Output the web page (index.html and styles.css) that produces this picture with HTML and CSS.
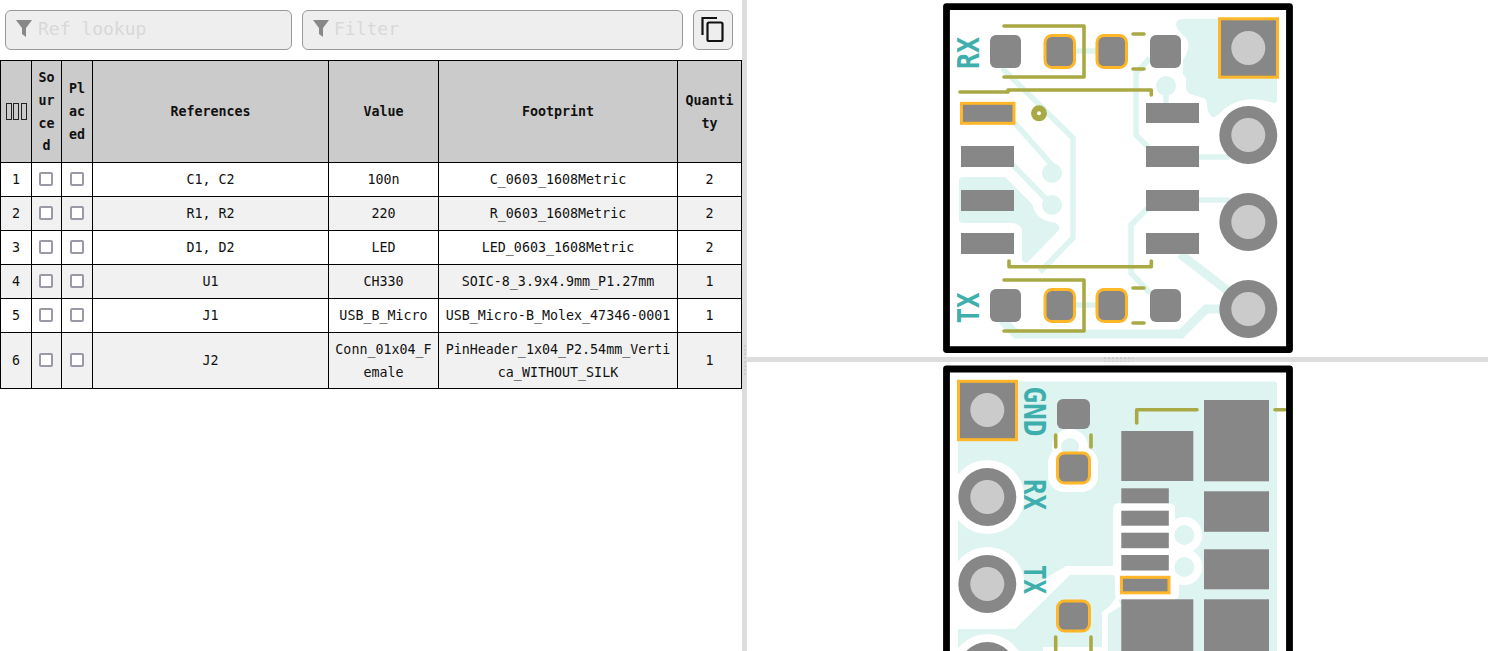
FILE: index.html
```html
<!DOCTYPE html>
<html lang="en">
<head>
<meta charset="utf-8">
<title>Interactive BOM</title>
<link rel="stylesheet" href="styles.css">
</head>
<body>
<div class="app">
  <section class="bom">
    <div class="toolbar">
      <label class="search search-ref">
        <svg class="funnel" viewBox="0 0 16 17"><path d="M0 0H16L10 8V17L6 14V8Z"/></svg>
        <input type="text" placeholder="Ref lookup">
      </label>
      <label class="search search-filter">
        <svg class="funnel" viewBox="0 0 16 17"><path d="M0 0H16L10 8V17L6 14V8Z"/></svg>
        <input type="text" placeholder="Filter">
      </label>
      <button class="copy" type="button" aria-label="Copy">
        <svg viewBox="0 0 24 28" class="copy-icon"><path d="M1.5 19V2H16"/><rect x="6.5" y="6.5" width="15" height="18.5" rx="1.5"/></svg>
      </button>
    </div>
    <table class="table">
      <colgroup><col class="c1"><col class="c2"><col class="c3"><col class="c4"><col class="c5"><col class="c6"><col class="c7"></colgroup>
      <thead>
        <tr><th><span class="tofu"><i></i><i></i><i></i></span></th><th>Sourced</th><th>Placed</th><th>References</th><th>Value</th><th>Footprint</th><th>Quantity</th></tr>
      </thead>
      <tbody>
        <tr><td>1</td><td><input type="checkbox"></td><td><input type="checkbox"></td><td>C1, C2</td><td>100n</td><td>C_0603_1608Metric</td><td>2</td></tr>
        <tr><td>2</td><td><input type="checkbox"></td><td><input type="checkbox"></td><td>R1, R2</td><td>220</td><td>R_0603_1608Metric</td><td>2</td></tr>
        <tr><td>3</td><td><input type="checkbox"></td><td><input type="checkbox"></td><td>D1, D2</td><td>LED</td><td>LED_0603_1608Metric</td><td>2</td></tr>
        <tr><td>4</td><td><input type="checkbox"></td><td><input type="checkbox"></td><td>U1</td><td>CH330</td><td>SOIC-8_3.9x4.9mm_P1.27mm</td><td>1</td></tr>
        <tr><td>5</td><td><input type="checkbox"></td><td><input type="checkbox"></td><td>J1</td><td>USB_B_Micro</td><td>USB_Micro-B_Molex_47346-0001</td><td>1</td></tr>
        <tr><td>6</td><td><input type="checkbox"></td><td><input type="checkbox"></td><td>J2</td><td>Conn_01x04_Female</td><td>PinHeader_1x04_P2.54mm_Vertica_WITHOUT_SILK</td><td>1</td></tr>
      </tbody>
    </table>
  </section>
  <div class="gutter-v"><span class="grip grip-v"></span></div>
  <section class="boards">
    <div class="board board-top">
      <svg class="pcb" viewBox="747 0 741 357">
        <g class="cu-fill">
          <path d="M1176 25Q1176 19 1182 19H1277V100Q1277 104 1274 103Q1240 92 1219 114Q1214 119 1211 116Q1207 112 1207 104Q1207 98 1200 97L1190 94Q1186 92 1186 86V78L1183 74V60Q1192 45 1186 38L1178 30Z"/>
          <path d="M963 177H1005L1032 204Q1036 220 1052 222Q1062 224 1058 231L1028 262Q1024 264 1022 260V232Q1022 224 1012 223H963Q959 223 959 219V181Q959 177 963 177Z"/>
        </g>
        <g class="cu-track">
          <path d="M1002 68L1073 138V238L1040 272"/>
          <path d="M1014 122L1052 165"/>
          <path d="M1012 164L1052 205"/>
          <path d="M1075 51H1097"/>
          <path d="M1150 58L1136 73V135L1148 147"/>
          <path d="M1166 86V104"/>
          <path d="M1199 157H1230"/>
          <path d="M1199 200H1230"/>
          <path d="M1148 208L1131 225V273L1150 293"/>
          <path d="M1075 305H1097"/>
          <path class="wide" d="M1180 254L1236 297"/>
          <path class="wide" d="M1225 309H1206L1181 334H1016L1002 320"/>
        </g>
        <g class="cu-via">
          <circle cx="1052" cy="173" r="10"/>
          <circle cx="1052" cy="205" r="10"/>
          <circle cx="1166" cy="86" r="10"/>
        </g>
        <g class="pad">
          <rect x="990" y="35" width="31" height="33" rx="6"/>
          <rect x="1150" y="35" width="31" height="33" rx="6"/>
          <rect x="990" y="289" width="31" height="33" rx="6"/>
          <rect x="1150" y="289" width="31" height="33" rx="6"/>
          <rect x="1146" y="103" width="53" height="20"/>
          <rect x="961" y="146" width="53" height="21"/>
          <rect x="1146" y="146" width="53" height="21"/>
          <rect x="961" y="190" width="53" height="21"/>
          <rect x="1146" y="190" width="53" height="21"/>
          <rect x="961" y="233" width="53" height="21"/>
          <rect x="1146" y="233" width="53" height="21"/>
          <circle cx="1248.3" cy="135" r="29"/>
          <circle cx="1248.3" cy="222" r="29"/>
          <circle cx="1248.3" cy="309" r="29"/>
        </g>
        <g class="pad sel">
          <rect x="1045" y="35.5" width="29.5" height="32" rx="7"/>
          <rect x="1097" y="35.5" width="29.5" height="32" rx="7"/>
          <rect x="1045" y="289.5" width="29.5" height="32" rx="7"/>
          <rect x="1097" y="289.5" width="29.5" height="32" rx="7"/>
          <rect x="1219.5" y="18.8" width="58" height="58.4"/>
          <rect x="961.5" y="103.3" width="52.5" height="20"/>
        </g>
        <g class="hole">
          <circle cx="1248.3" cy="48" r="17"/>
          <circle cx="1248.3" cy="135" r="17"/>
          <circle cx="1248.3" cy="222" r="17"/>
          <circle cx="1248.3" cy="309" r="17"/>
        </g>
        <g class="silk">
          <path d="M1004 26H1084V77H1004"/>
          <path d="M1133 34H1144M1133 69H1144"/>
          <path d="M960 92H1008V90H1151.3V95"/>
          <path d="M1009 261V266.7H1151.3V261"/>
          <path d="M1004 280H1084V331H1004"/>
          <path d="M1133 288H1144M1133 323H1144"/>
        </g>
        <circle class="dot" cx="1039" cy="113.3" r="5"/>
        <text class="label" transform="translate(979 69) rotate(-90)" textLength="32" lengthAdjust="spacingAndGlyphs">RX</text>
        <text class="label" transform="translate(979 323.500) rotate(-90)" textLength="31" lengthAdjust="spacingAndGlyphs">TX</text>
        <rect class="edge" x="946.5" y="6.6" width="343" height="343"/>
      </svg>
    </div>
    <div class="gutter-h"><span class="grip grip-h"></span></div>
    <div class="board board-bottom">
      <svg class="pcb" viewBox="747 362 741 289">
        <rect class="cu-zone" x="958" y="381.500" width="319" height="300" rx="3"/>
        <g class="clear">
          <circle cx="987.3" cy="497" r="37"/>
          <circle cx="987.3" cy="584" r="37"/>
          <circle cx="987.3" cy="671" r="37"/>
          <circle cx="1070" cy="447" r="18"/>
          <rect x="1048" y="447" width="50" height="45" rx="16"/>
          <rect x="1113" y="503" width="62" height="76" rx="6"/>
          <rect x="1115" y="572" width="64" height="28" rx="6"/>
          <circle cx="1184.3" cy="535" r="18"/>
          <circle cx="1184.3" cy="567" r="18"/>
          <path d="M958 629H1015L1070 575H1116V566H1066L1010 600H958Z"/>
          <path d="M1117 596L1110 606L1102 612V647H1043V660H1108V614L1121 606Z"/>
        </g>
        <g class="cu-via">
          <circle cx="1070" cy="447" r="9"/>
          <circle cx="1184.3" cy="535" r="10"/>
          <circle cx="1184.3" cy="567" r="10"/>
        </g>
        <g class="pad">
          <rect x="1057" y="399" width="33" height="30" rx="6"/>
          <rect x="1121.3" y="431" width="72" height="50"/>
          <rect x="1121.3" y="599.300" width="72" height="60"/>
          <rect x="1204" y="400" width="65" height="81.300"/>
          <rect x="1204" y="491.300" width="65" height="40.500"/>
          <rect x="1204" y="549.300" width="65" height="40"/>
          <rect x="1204" y="599.300" width="65" height="60"/>
          <rect x="1121.3" y="488.300" width="47.500" height="15"/>
          <rect x="1121.3" y="510.700" width="47.500" height="15"/>
          <rect x="1121.3" y="532.700" width="47.500" height="15.500"/>
          <rect x="1121.3" y="555" width="47.500" height="15.500"/>
          <circle cx="987.3" cy="497" r="29"/>
          <circle cx="987.3" cy="584" r="29"/>
          <circle cx="987.3" cy="671" r="29"/>
        </g>
        <g class="pad sel">
          <rect x="958.5" y="381.300" width="58" height="58.400"/>
          <rect x="1057.500" y="453" width="32" height="30" rx="7"/>
          <rect x="1057.500" y="601" width="32" height="30" rx="7"/>
          <rect x="1121.500" y="577.300" width="47.500" height="15.500"/>
        </g>
        <g class="hole">
          <circle cx="987.3" cy="410" r="17"/>
          <circle cx="987.3" cy="497" r="17"/>
          <circle cx="987.3" cy="584" r="17"/>
          <circle cx="987.3" cy="671" r="17"/>
        </g>
        <g class="silk">
          <path d="M1197 409.700H1136.700V423"/>
          <path d="M1275 409.700H1285"/>
          <path d="M1055.700 435V447M1091 435V447"/>
          <path d="M1055.700 637V650M1091 637V650"/>
        </g>
        <text class="label" transform="translate(1023.500 386.500) rotate(90)" textLength="50" lengthAdjust="spacingAndGlyphs">GND</text>
        <text class="label" transform="translate(1023.500 479) rotate(90)" textLength="31" lengthAdjust="spacingAndGlyphs">RX</text>
        <text class="label" transform="translate(1023.500 565) rotate(90)" textLength="29" lengthAdjust="spacingAndGlyphs">TX</text>
        <rect class="edge" x="946.500" y="369" width="343" height="343"/>
      </svg>
    </div>
  </section>
</div>
</body>
</html>
```

FILE: styles.css
```css
html, body {
  margin: 0;
  height: 100%;
  overflow: hidden;
  background: #fff;
}

.app {
  display: flex;
  height: 651px;
  font-family: "DejaVu Sans Mono", monospace;
}

.bom {
  width: 742px;
  flex: none;
}

.toolbar {
  display: flex;
  gap: 10px;
  padding: 10px 9px 10px 5px;
  height: 40px;
}

.search {
  display: flex;
  align-items: center;
  gap: 6px;
  box-sizing: border-box;
  height: 40px;
  padding-left: 10px;
  background: #eee;
  border: 1px solid #999;
  border-radius: 6px;
}

.search-ref { width: 287px; }
.search-filter { width: 381px; gap: 5px; }

.funnel {
  width: 16px;
  height: 17px;
  margin-bottom: 3px;
  flex: none;
}

.funnel path { fill: #888; }

.search input {
  flex: 1;
  min-width: 0;
  border: 0;
  padding: 0;
  margin-bottom: 3px;
  background: transparent;
  font: 18px "DejaVu Sans Mono", monospace;
  outline: none;
}

.search input::placeholder { color: #d8d8d8; opacity: 1; }

.copy {
  box-sizing: border-box;
  width: 40px;
  height: 40px;
  padding: 0;
  display: flex;
  align-items: center;
  justify-content: center;
  background: #eee;
  border: 1px solid #999;
  border-radius: 6px;
}

.copy-icon {
  width: 24px;
  height: 28px;
  fill: none;
  stroke: #111;
  stroke-width: 2.2;
}

.table {
  border-collapse: collapse;
  table-layout: fixed;
  width: 741px;
  font-size: 13.33px;
  line-height: 22.67px;
  color: #111;
}

.c1 { width: 31px; }
.c2 { width: 30px; }
.c3 { width: 31px; }
.c4 { width: 236px; }
.c5 { width: 110px; }
.c6 { width: 239px; }
.c7 { width: 64px; }

.table th, .table td {
  border: 1px solid #000;
  padding: 6px 5px 4px;
  text-align: center;
  word-break: break-all;
}

.table thead tr { height: 102px; }
.table tbody tr { height: 34px; }

.table th {
  background: #cbcbcb;
  font-weight: bold;
}

.table th:first-child { padding: 5px 0; }

.tofu {
  display: flex;
  justify-content: center;
  gap: 1.5px;
}

.tofu i {
  box-sizing: border-box;
  width: 6px;
  height: 17px;
  border: 1px solid #222;
}

.table tbody tr:nth-child(even) td { background: #f1f1f1; }

.table td:nth-child(2), .table td:nth-child(3) { padding: 4px 0 6px; }
.table td:nth-child(2) { padding-right: 2px; }

.table input[type="checkbox"] {
  appearance: none;
  display: block;
  box-sizing: border-box;
  width: 14px;
  height: 14px;
  margin: 0 auto;
  background: #fff;
  border: 2px solid #9a9aa6;
  border-radius: 2px;
}

.gutter-v {
  position: relative;
  width: 5px;
  flex: none;
  background: #ddd;
}

.gutter-h {
  position: relative;
  height: 5px;
  background: #ddd;
}

.grip {
  position: absolute;
  background-image: conic-gradient(#ccc 25%, transparent 0);
  background-size: 4px 4px;
}

.grip-v { left: 0; top: 345px; width: 5px; height: 31px; }
.grip-h { left: 355px; top: 0; width: 31px; height: 5px; }

.boards {
  flex: 1;
  display: flex;
  flex-direction: column;
  min-width: 0;
}

.board { overflow: hidden; }
.board-top { height: 357px; }
.board-bottom { height: 289px; }

.pcb {
  display: block;
  width: 741px;
  height: 100%;
}

.cu-zone, .cu-fill path, .cu-via circle { fill: #def4f0; }

.cu-track path {
  fill: none;
  stroke: #def4f0;
  stroke-width: 5.5;
}

.cu-track path.wide { stroke-width: 9; }

.clear circle, .clear rect, .clear path { fill: #fff; }

.pad rect, .pad circle { fill: #878787; }

.pad.sel rect {
  stroke: #ffb629;
  stroke-width: 3;
}

.hole circle { fill: #cbcbcb; }

.silk path {
  fill: none;
  stroke: #a9a945;
  stroke-width: 3.6;
  stroke-linecap: round;
  stroke-linejoin: round;
}

.dot {
  fill: #fff;
  stroke: #a9a945;
  stroke-width: 6;
}

.label {
  fill: #3fafad;
  font-family: "DejaVu Sans Mono", monospace;
  font-weight: bold;
  font-size: 30px;
}

.edge {
  fill: none;
  stroke: #000;
  stroke-width: 6.8;
  stroke-linejoin: round;
}
```
